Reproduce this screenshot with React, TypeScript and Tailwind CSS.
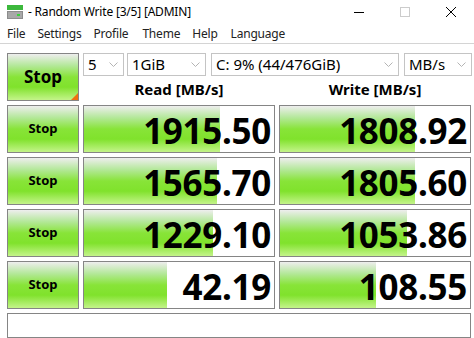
import React from "react";

type Row = { read: string; write: string; rw: number; ww: number };

const rows: Row[] = [
  { read: "1915.50", write: "1808.92", rw: 136, ww: 135 },
  { read: "1565.70", write: "1805.60", rw: 133, ww: 135 },
  { read: "1229.10", write: "1053.86", rw: 129, ww: 127 },
  { read: "42.19", write: "108.55", rw: 83, ww: 96 },
];

const green =
  "bg-[linear-gradient(to_bottom,#eeeeee_0%,#b4e89a_25%,#88e438_50%,#80e22c_72%,#c4f48a_100%)]";

function Chevron() {
  return (
    <svg width="9" height="6" viewBox="0 0 9 6" className="shrink-0">
      <path d="M0.5 0.5 L4.5 4.5 L8.5 0.5" fill="none" stroke="#b4b4b4" strokeWidth="1" />
    </svg>
  );
}

function Combo({ label, className }: { label: string; className: string }) {
  return (
    <div
      className={`h-[23px] border border-[#c4c4c4] bg-white flex items-center justify-between pl-[4px] pr-[5px] text-[15px] leading-none text-black ${className}`}
    >
      <span>{label}</span>
      <Chevron />
    </div>
  );
}

function Cell({ value, fill }: { value: string; fill: number }) {
  return (
    <div className="relative h-[48px] border border-[#858585] bg-white overflow-hidden">
      <div className={`absolute left-0 top-0 bottom-0 ${green}`} style={{ width: fill }} />
      <div className="relative h-full flex items-center justify-end pr-[3px] pt-[2px] text-[35px] font-bold leading-none text-black tracking-[-0.3px]">
        {value}
      </div>
    </div>
  );
}

function StopBtn() {
  return (
    <div
      className={`h-[48px] border border-[#858585] flex items-center justify-center text-[13px] font-bold text-black ${green}`}
    >
      Stop
    </div>
  );
}

export default function App() {
  return (
    <div
      className="w-[474px] h-[338px] bg-white overflow-hidden flex flex-col"
      style={{ fontFamily: '"Noto Sans", "Open Sans", sans-serif' }}
    >
      {/* Title bar */}
      <div className="h-[24px] flex items-center relative">
        <svg width="16" height="16" viewBox="0 0 16 16" className="ml-[7px]">
          <rect x="0" y="1" width="16" height="5" fill="#3cb83c" />
          <rect x="0" y="7" width="16" height="8" fill="#8c8c8c" />
          <rect x="1" y="8" width="14" height="6" fill="#a8a8a8" />
          <rect x="10" y="10" width="3" height="2" fill="#3cd03c" />
        </svg>
        <span className="ml-[5px] text-[12px] text-black tracking-[-0.2px]">- Random Write [3/5] [ADMIN]</span>
        <div className="ml-auto flex items-center h-full">
          <div className="w-[46px] flex justify-center">
            <div className="w-[10px] h-px bg-black" />
          </div>
          <div className="w-[46px] flex justify-center">
            <div className="w-[10px] h-[10px] border border-[#cccccc]" />
          </div>
          <div className="w-[46px] flex justify-center">
            <svg width="10" height="10" viewBox="0 0 10 10">
              <path d="M0 0 L10 10 M10 0 L0 10" stroke="#000" strokeWidth="1" />
            </svg>
          </div>
        </div>
      </div>

      {/* Menu bar */}
      <div className="h-[20px] flex items-center text-[12px] text-[#222] tracking-[-0.2px] border-b border-[#d4d4d4]">
        <span className="ml-[7px]">File</span>
        <span className="ml-[12px]">Settings</span>
        <span className="ml-[12px]">Profile</span>
        <span className="ml-[14px]">Theme</span>
        <span className="ml-[12px]">Help</span>
        <span className="ml-[13px]">Language</span>
      </div>

      {/* Content */}
      <div className="pl-[7px] pt-[9px]">
        <div className="flex h-[48px]">
          <div
            className={`relative w-[72px] h-[48px] border border-[#858585] flex items-center justify-center text-[17px] font-bold text-black ${green}`}
          >
            Stop
            <div className="absolute right-0 bottom-0 w-0 h-0 border-l-[7px] border-l-transparent border-b-[7px] border-b-[#f07010]" />
          </div>
          <div className="flex flex-col ml-[4px]">
            <div className="flex">
              <Combo label="5" className="w-[41px]" />
              <Combo label="1GiB" className="w-[79px] ml-[3px]" />
              <Combo label="C: 9% (44/476GiB)" className="w-[188px] ml-[5px]" />
              <Combo label="MB/s" className="w-[68px] ml-[5px]" />
            </div>
            <div className="flex mt-[2px] text-[15px] font-bold text-black leading-[23px]">
              <div className="w-[192px] text-center">Read [MB/s]</div>
              <div className="w-[192px] ml-[4px] text-center">Write [MB/s]</div>
            </div>
          </div>
        </div>

        <div className="grid grid-cols-[72px_192px_192px] gap-x-[4px] gap-y-[4px] mt-[4px]">
          {rows.map((r) => (
            <React.Fragment key={r.read}>
              <StopBtn />
              <Cell value={r.read} fill={r.rw} />
              <Cell value={r.write} fill={r.ww} />
            </React.Fragment>
          ))}
          <div className="col-span-3 h-[25px] border border-[#858585] bg-white" />
        </div>
      </div>
    </div>
  );
}
